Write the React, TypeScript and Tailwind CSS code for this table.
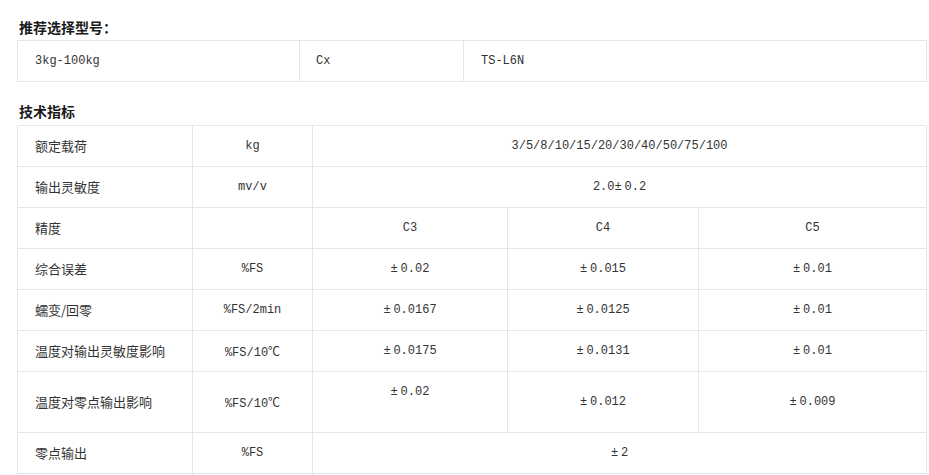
import React from "react";

const mono = "font-['Liberation_Mono','Noto_Sans_CJK_SC',monospace]";
const cjk = "font-['Noto_Sans_CJK_SC','Liberation_Sans',sans-serif] text-[13px] leading-[20px] align-top";

const td = "border border-[#e6e6e6] py-[10px] align-middle";

function Cn({ children }: { children: React.ReactNode }) {
  return <span className={cjk}>{children}</span>;
}

type Row = { label: string; unit: string; vals: (string | string[])[] };

const rows: Row[] = [
  { label: "额定载荷", unit: "kg", vals: ["3/5/8/10/15/20/30/40/50/75/100"] },
  { label: "输出灵敏度", unit: "mv/v", vals: ["2.0±0.2"] },
  { label: "精度", unit: "", vals: ["C3", "C4", "C5"] },
  { label: "综合误差", unit: "%FS", vals: ["±0.02", "±0.015", "±0.01"] },
  { label: "蠕变/回零", unit: "%FS/2min", vals: ["±0.0167", "±0.0125", "±0.01"] },
  { label: "温度对输出灵敏度影响", unit: "%FS/10℃", vals: ["±0.0175", "±0.0131", "±0.01"] },
  { label: "温度对零点输出影响", unit: "%FS/10℃", vals: [["±0.02", "\u00a0"], "±0.012", "±0.009"] },
  { label: "零点输出", unit: "%FS", vals: ["±2"] },
];

function Val({ v }: { v: string }) {
  const parts = v.split(/(±|℃)/);
  return (
    <>
      {parts.map((p, i) =>
        p === "±" ? (
          <span key={i} className="inline-block w-[10px] text-left">
            ±
          </span>
        ) : p === "℃" ? (
          <span key={i} className="font-['Noto_Sans_CJK_SC',sans-serif] text-[12px]">
            ℃
          </span>
        ) : (
          <span key={i}>{p}</span>
        )
      )}
    </>
  );
}

function Line({ children }: { children: React.ReactNode }) {
  return <div className="h-[20px] leading-[20px] whitespace-nowrap">{children}</div>;
}

export default function App() {
  return (
    <div className={`w-[929px] h-[475px] overflow-hidden bg-white text-[#333] text-[12px] ${mono}`}>
      <div className="px-[17px]">
        <div className="mt-[17px] h-[20px] leading-[20px] pl-[2px] font-bold text-[#1a1a1a] font-['Noto_Sans_CJK_SC',sans-serif] text-[14px]">
          推荐选择型号：
        </div>
        <table className="mt-[3px] w-[909px] table-fixed border-collapse">
          <colgroup>
            <col className="w-[282px]" />
            <col className="w-[164px]" />
            <col className="w-[463px]" />
          </colgroup>
          <tbody>
            <tr>
              <td className={`${td} pl-[17px] text-left`}>
                <Line>3kg-100kg</Line>
              </td>
              <td className={`${td} pl-[16px] text-left`}>
                <Line>Cx</Line>
              </td>
              <td className={`${td} pl-[17px] text-left`}>
                <Line>TS-L6N</Line>
              </td>
            </tr>
          </tbody>
        </table>

        <div className="mt-[19px] h-[20px] leading-[20px] pl-[2px] font-bold text-[#1a1a1a] font-['Noto_Sans_CJK_SC',sans-serif] text-[14px]">
          技术指标
        </div>
        <table className="mt-[4px] w-[909px] table-fixed border-collapse">
          <colgroup>
            <col className="w-[175px]" />
            <col className="w-[120px]" />
            <col className="w-[195px]" />
            <col className="w-[191px]" />
            <col className="w-[228px]" />
          </colgroup>
          <tbody>
            {rows.map((r) => (
              <tr key={r.label}>
                <td className={`${td} pl-[17px] text-left`}>
                  <Line>
                    <Cn>{r.label}</Cn>
                  </Line>
                </td>
                <td className={`${td} text-center`}>
                  <Line>
                    <Val v={r.unit} />
                  </Line>
                </td>
                {r.vals.length === 1 ? (
                  <td colSpan={3} className={`${td} text-center`}>
                    <Line>
                      <Val v={r.vals[0] as string} />
                    </Line>
                  </td>
                ) : (
                  r.vals.map((v, i) => (
                    <td key={i} className={`${td} text-center`}>
                      {Array.isArray(v) ? (
                        <>
                          <Line>
                            <Val v={v[0]} />
                          </Line>
                          <Line>{v[1]}</Line>
                        </>
                      ) : (
                        <Line>
                          <Val v={v} />
                        </Line>
                      )}
                    </td>
                  ))
                )}
              </tr>
            ))}
            <tr>
              <td className={td}>
                <Line>{"\u00a0"}</Line>
              </td>
              <td className={td}>
                <Line>{"\u00a0"}</Line>
              </td>
              <td colSpan={3} className={td}>
                <Line>{"\u00a0"}</Line>
              </td>
            </tr>
          </tbody>
        </table>
      </div>
    </div>
  );
}
